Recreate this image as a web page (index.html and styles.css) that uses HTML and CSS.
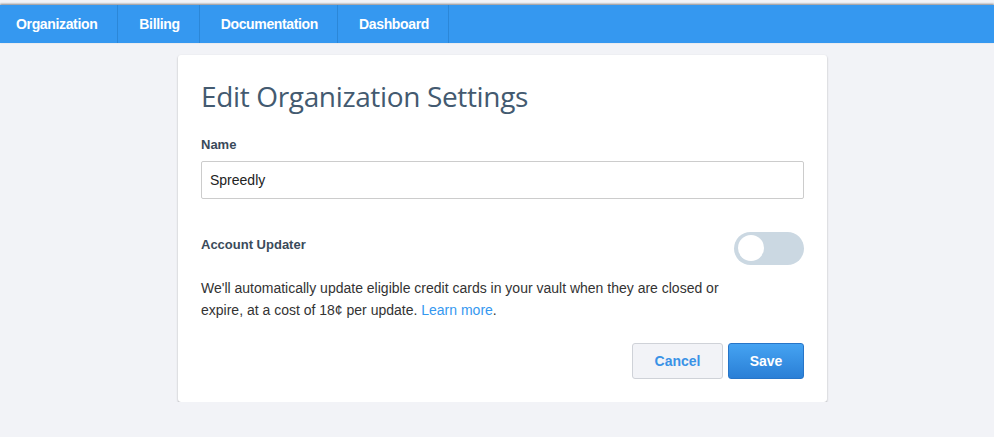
FILE: index.html
```html
<!DOCTYPE html>
<html lang="en">
<head>
    <meta charset="UTF-8">
    <meta name="viewport" content="width=device-width, initial-scale=1.0">
    <title>Edit Organization Settings</title>
    <link rel="stylesheet" href="styles.css">
</head>
<body>

    <nav class="topnav">
        <a href="#" class="first">Organization</a>
        <a href="#">Billing</a>
        <a href="#">Documentation</a>
        <a href="#">Dashboard</a>
    </nav>

    <!-- Settings Card -->
    <section class="card">
        <h1>Edit Organization Settings</h1>

        <label class="field-label" for="orgName">Name</label>
        <input type="text" id="orgName" class="text-input" value="Spreedly">

        <div class="updater-row">
            <span class="field-label">Account Updater</span>
            <span class="toggle"><span class="knob"></span></span>
        </div>

        <p class="note">We'll automatically update eligible credit cards in your vault when they are closed or expire, at a cost of 18¢ per update. <a href="#">Learn more</a>.</p>

        <div class="actions">
            <button class="btn btn-cancel">Cancel</button>
            <button class="btn btn-save">Save</button>
        </div>
    </section>

</body>
</html>
```

FILE: styles.css
```css
/* Page */
body {
    margin: 0;
    padding-top: 5px;
    font-family: "Liberation Sans", Arial, sans-serif;
    background: #f2f3f7;
    color: #333;
}

/* Top Navigation */
.topnav {
    display: flex;
    height: 38px;
    background: #3598f0;
    box-shadow: 0 -1px 2px rgba(0, 0, 0, 0.45);
}

.topnav a {
    display: flex;
    align-items: center;
    padding: 0 19px 0 21px;
    color: white;
    font-size: 14px;
    font-weight: bold;
    text-decoration: none;
    border-right: 1px solid #2b87d8;
    letter-spacing: -0.35px;
}

.topnav a.first {
    padding: 0 20px 0 16px;
}

/* Card */
.card {
    width: 603px;
    margin: 12px 0 0 178px;
    padding: 20px 23px 23px;
    background: white;
    border-radius: 3px;
    box-shadow: 0 1px 2px rgba(0, 0, 0, 0.3);
}

.card h1 {
    margin: 2px 0 22px;
    font-family: "Open Sans", sans-serif;
    font-size: 28px;
    font-weight: normal;
    color: #435a70;
    letter-spacing: -0.35px;
}

.field-label {
    display: block;
    font-size: 13px;
    font-weight: bold;
    color: #3a4a5a;
}

.text-input {
    display: block;
    box-sizing: border-box;
    width: 603px;
    height: 38px;
    margin-top: 9px;
    padding: 0 8px;
    border: 1px solid #cccccc;
    border-radius: 2px;
    font-family: "Liberation Sans", Arial, sans-serif;
    font-size: 14px;
    color: #222;
}

/* Account updater toggle */
.updater-row {
    display: flex;
    justify-content: space-between;
    align-items: flex-start;
    margin-top: 34px;
}

.updater-row .field-label {
    margin-top: 4px;
}

.toggle {
    display: block;
    width: 70px;
    height: 33px;
    margin-top: -1px;
    border-radius: 17px;
    background: #cbd8e2;
}

.toggle .knob {
    display: block;
    width: 26px;
    height: 26px;
    margin: 3px 0 0 4px;
    border-radius: 50%;
    background: white;
}

.note {
    margin: 12px 0 0;
    width: 540px;
    font-size: 14px;
    line-height: 22px;
    color: #333;
}

.note a {
    color: #3598f0;
    text-decoration: none;
}

/* Buttons */
.actions {
    display: flex;
    justify-content: flex-end;
    gap: 5px;
    margin-top: 22px;
}

.btn {
    height: 36px;
    border-radius: 3px;
    font-family: "Liberation Sans", Arial, sans-serif;
    font-size: 14px;
    font-weight: bold;
}

.btn-cancel {
    width: 91px;
    background: #f2f3f7;
    border: 1px solid #cfd2d8;
    color: #3a92e6;
}

.btn-save {
    width: 76px;
    background: linear-gradient(to bottom, #45a3f2, #2a7fd6);
    border: 1px solid #2775c8;
    color: white;
}
```
